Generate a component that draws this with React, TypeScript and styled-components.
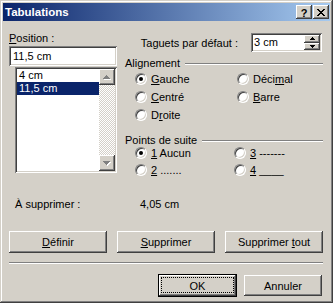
import React from "react";
import styled, { createGlobalStyle, css } from "styled-components";

const Global = createGlobalStyle`
  html, body { margin: 0; padding: 0; background: #ffffff; }
  body { font-family: "Liberation Sans", Arial, sans-serif; font-size: 11px; color: #000; }
  * { box-sizing: border-box; }
`;

const raised = css`
  background: #d4d0c8;
  box-shadow: inset -1px -1px #404040, inset 1px 1px #ffffff, inset -2px -2px #808080, inset 2px 2px #d4d0c8;
`;

const sunken = css`
  background: #ffffff;
  box-shadow: inset 1px 1px #808080, inset -1px -1px #ffffff, inset 2px 2px #404040, inset -2px -2px #d4d0c8;
`;

const Window = styled.div`
  width: 333px;
  height: 303px;
  padding: 3px;
  background: #d4d0c8;
  box-shadow: inset -1px -1px #404040, inset 1px 1px #d4d0c8, inset -2px -2px #808080, inset 2px 2px #ffffff;
  display: flex;
  flex-direction: column;
`;

const TitleBar = styled.div`
  height: 18px;
  flex: none;
  display: flex;
  align-items: center;
  justify-content: space-between;
  padding: 0 1px 0 2px;
  background: linear-gradient(to right, #0a246a, #a6caf0);
`;

const Title = styled.span`
  color: #ffffff;
  font-weight: bold;
  font-size: 11.5px;
  line-height: 14px;
`;

const CaptionButtons = styled.div`
  display: flex;
  gap: 1px;
`;

const CaptionButton = styled.div`
  ${raised};
  width: 16px;
  height: 14px;
  display: flex;
  align-items: center;
  justify-content: center;
  font-weight: bold;
  font-size: 11px;
  line-height: 14px;
  padding-top: 1px;
`;

const Body = styled.div`
  flex: 1;
  display: flex;
  flex-direction: column;
  padding: 11px 7px 0 6px;
`;

const TopArea = styled.div`
  display: flex;
  align-items: flex-start;
  gap: 8px;
`;

const LeftCol = styled.div`
  width: 108px;
  display: flex;
  flex-direction: column;
`;

const FieldLabel = styled.div`
  height: 13px;
  line-height: 13px;
  margin-bottom: 1px;
  white-space: nowrap;
`;

const Key = styled.span`
  text-decoration: underline;
  text-decoration-skip-ink: none;
  text-underline-offset: 1px;
`;

const TextBox = styled.div`
  ${sunken};
  height: 20px;
  line-height: 20px;
  padding-left: 4px;
`;

const ListBox = styled.div`
  ${sunken};
  margin: 1px 0 0 6px;
  height: 106px;
  padding: 2px;
  display: flex;
`;

const ListItems = styled.div`
  flex: 1;
  display: flex;
  flex-direction: column;
`;

const ListItem = styled.div<{ $selected?: boolean }>`
  height: 13px;
  line-height: 13px;
  padding-left: 2px;
  ${(p) =>
    p.$selected &&
    css`
      background: #0a246a;
      color: #ffffff;
    `}
`;

const ScrollBar = styled.div`
  width: 16px;
  display: flex;
  flex-direction: column;
`;

const ScrollButton = styled.div`
  ${raised};
  width: 16px;
  height: 16px;
  flex: none;
  display: flex;
  align-items: center;
  justify-content: center;
`;

const Track = styled.div`
  flex: 1;
  background: repeating-conic-gradient(#d4d0c8 0% 25%, #ffffff 0% 50%) 0 0 / 2px 2px;
`;

const RightCol = styled.div`
  flex: 1;
  display: flex;
  flex-direction: column;
`;

const DefaultRow = styled.div`
  height: 19px;
  margin-top: 1px;
  padding-right: 1px;
  display: flex;
  align-items: center;
  justify-content: flex-end;
  gap: 13px;
  white-space: nowrap;
`;

const Spinner = styled.div`
  ${sunken};
  width: 71px;
  height: 19px;
  padding: 2px;
  display: flex;
`;

const SpinText = styled.div`
  flex: 1;
  line-height: 15px;
  padding-left: 1px;
`;

const SpinButtons = styled.div`
  width: 16px;
  display: flex;
  flex-direction: column;
`;

const SpinButton = styled.div`
  ${raised};
  flex: 1;
  display: flex;
  align-items: center;
  justify-content: center;
`;

const Group = styled.div<{ $top: number }>`
  margin-top: ${(p) => p.$top}px;
  display: flex;
  flex-direction: column;
`;

const GroupHeader = styled.div`
  height: 13px;
  line-height: 13px;
  display: flex;
  align-items: center;
  white-space: nowrap;
`;

const HeaderLine = styled.div`
  flex: 1;
  margin-left: 5px;
  height: 2px;
  border-top: 1px solid #808080;
  border-bottom: 1px solid #ffffff;
`;

const RadioGrid = styled.div<{ $col: number; $row: number; $shift: number }>`
  display: grid;
  grid-template-columns: ${(p) => p.$col}px 1fr;
  grid-auto-rows: ${(p) => p.$row}px;
  padding-left: 10px;
  margin-top: ${(p) => p.$shift}px;
`;

const RadioOption = styled.div`
  display: flex;
  align-items: center;
  gap: 4px;
  white-space: nowrap;
`;

const RadioCircle = styled.span<{ $checked?: boolean }>`
  position: relative;
  flex: none;
  width: 12px;
  height: 12px;
  border-radius: 50%;
  background: #ffffff;
  border: 1px solid;
  border-color: #808080 #ffffff #ffffff #808080;
  box-shadow: inset 1px 1px #404040, inset -1px -1px #d4d0c8;
  ${(p) =>
    p.$checked &&
    css`
      &::after {
        content: "";
        position: absolute;
        left: 3px;
        top: 3px;
        width: 4px;
        height: 4px;
        border-radius: 50%;
        background: #000000;
      }
    `}
`;

const InfoRow = styled.div`
  margin-top: 20px;
  height: 13px;
  line-height: 13px;
  padding-left: 6px;
  display: flex;
`;

const InfoLabel = styled.span`
  width: 125px;
`;

const ButtonRow = styled.div`
  margin-top: 20px;
  display: flex;
  gap: 10px;
`;

const Button = styled.div<{ $w: number; $h?: number }>`
  ${raised};
  width: ${(p) => p.$w}px;
  height: ${(p) => p.$h ?? 22}px;
  display: flex;
  align-items: center;
  justify-content: center;
  white-space: nowrap;
`;

const DefaultButton = styled(Button)`
  position: relative;
  box-shadow: inset 0 0 0 1px #000000, inset -2px -2px #404040, inset 2px 2px #ffffff,
    inset -3px -3px #808080, inset 3px 3px #d4d0c8;
  &::after {
    content: "";
    position: absolute;
    inset: 3px 3px 4px 3px;
    border: 1px dotted #000000;
  }
`;

const Separator = styled.div`
  margin-top: 9px;
  height: 2px;
  border-top: 1px solid #808080;
  border-bottom: 1px solid #ffffff;
`;

const FooterRow = styled.div`
  margin-top: 10px;
  display: flex;
  justify-content: flex-end;
  align-items: center;
  gap: 7px;
  padding-right: 1px;
`;

const PixelArrow = ({ dir, color, shadow }: { dir: "up" | "down"; color: string; shadow?: boolean }) => {
  const rows = [1, 3, 5, 7];
  const make = (fill: string, dx: number, dy: number) =>
    rows.map((w, i) => {
      const y = dir === "up" ? i : 3 - i;
      return <rect key={`${fill}${i}`} x={(7 - w) / 2 + dx} y={y + dy} width={w} height={1} fill={fill} />;
    });
  return (
    <svg width="8" height="5" viewBox="0 0 8 5" shapeRendering="crispEdges">
      {shadow && make("#ffffff", 1, 1)}
      {make(color, 0, 0)}
    </svg>
  );
};

const SmallArrow = ({ dir }: { dir: "up" | "down" }) => {
  const rows = [1, 3, 5];
  return (
    <svg width="5" height="3" viewBox="0 0 5 3" shapeRendering="crispEdges">
      {rows.map((w, i) => (
        <rect key={i} x={(5 - w) / 2} y={dir === "up" ? i : 2 - i} width={w} height={1} fill="#000" />
      ))}
    </svg>
  );
};

const CloseGlyph = () => (
  <svg width="8" height="7" viewBox="0 0 8 7" shapeRendering="crispEdges">
    {Array.from({ length: 7 }).map((_, i) => (
      <React.Fragment key={i}>
        <rect x={i} y={i} width={2} height={1} fill="#000" />
        <rect x={6 - i} y={i} width={2} height={1} fill="#000" />
      </React.Fragment>
    ))}
  </svg>
);

const Radio = ({ checked, children }: { checked?: boolean; children: React.ReactNode }) => (
  <RadioOption>
    <RadioCircle $checked={checked} />
    <span>{children}</span>
  </RadioOption>
);

export default function App() {
  return (
    <>
      <Global />
      <Window>
        <TitleBar>
          <Title>Tabulations</Title>
          <CaptionButtons>
            <CaptionButton>?</CaptionButton>
            <CaptionButton>
              <CloseGlyph />
            </CaptionButton>
          </CaptionButtons>
        </TitleBar>
        <Body>
          <TopArea>
            <LeftCol>
              <FieldLabel>
                <Key>P</Key>osition :
              </FieldLabel>
              <TextBox>11,5 cm</TextBox>
              <ListBox>
                <ListItems>
                  <ListItem>4 cm</ListItem>
                  <ListItem $selected>11,5 cm</ListItem>
                </ListItems>
                <ScrollBar>
                  <ScrollButton>
                    <PixelArrow dir="up" color="#808080" shadow />
                  </ScrollButton>
                  <Track />
                  <ScrollButton>
                    <PixelArrow dir="down" color="#808080" shadow />
                  </ScrollButton>
                </ScrollBar>
              </ListBox>
            </LeftCol>
            <RightCol>
              <DefaultRow>
                <span>Taguets par défaut :</span>
                <Spinner>
                  <SpinText>3 cm</SpinText>
                  <SpinButtons>
                    <SpinButton>
                      <SmallArrow dir="up" />
                    </SpinButton>
                    <SpinButton>
                      <SmallArrow dir="down" />
                    </SpinButton>
                  </SpinButtons>
                </Spinner>
              </DefaultRow>
              <Group $top={5}>
                <GroupHeader>
                  Alignement
                  <HeaderLine />
                </GroupHeader>
                <RadioGrid $col={102} $row={18} $shift={0}>
                  <Radio checked>
                    <Key>G</Key>auche
                  </Radio>
                  <Radio>
                    Déci<Key>m</Key>al
                  </Radio>
                  <Radio>
                    <Key>C</Key>entré
                  </Radio>
                  <Radio>
                    <Key>B</Key>arre
                  </Radio>
                  <Radio>
                    D<Key>r</Key>oite
                  </Radio>
                </RadioGrid>
              </Group>
              <Group $top={10}>
                <GroupHeader>
                  Points de suite
                  <HeaderLine />
                </GroupHeader>
                <RadioGrid $col={99} $row={17} $shift={-3}>
                  <Radio checked>
                    <Key>1</Key> Aucun
                  </Radio>
                  <Radio>
                    <Key>3</Key> -------
                  </Radio>
                  <Radio>
                    <Key>2</Key> .......
                  </Radio>
                  <Radio>
                    <Key>4</Key> ____
                  </Radio>
                </RadioGrid>
              </Group>
            </RightCol>
          </TopArea>
          <InfoRow>
            <InfoLabel>À supprimer :</InfoLabel>
            <span>4,05 cm</span>
          </InfoRow>
          <ButtonRow>
            <Button $w={98}>
              <span>
                <Key>D</Key>éfinir
              </span>
            </Button>
            <Button $w={98}>
              <span>
                <Key>S</Key>upprimer
              </span>
            </Button>
            <Button $w={98}>
              <span>
                Supprimer <Key>t</Key>out
              </span>
            </Button>
          </ButtonRow>
          <Separator />
          <FooterRow>
            <DefaultButton $w={79} $h={23}>
              OK
            </DefaultButton>
            <Button $w={78} $h={21}>
              Annuler
            </Button>
          </FooterRow>
        </Body>
      </Window>
    </>
  );
}
